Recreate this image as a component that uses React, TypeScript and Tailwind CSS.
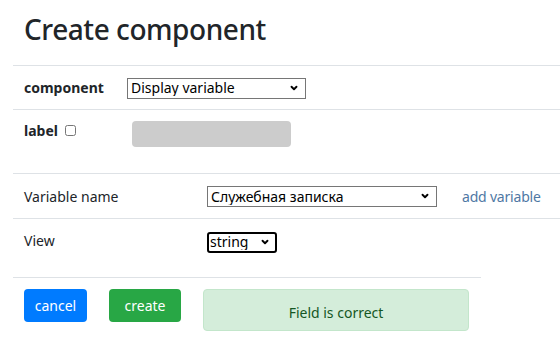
import { ChevronDown } from 'lucide-react'

function Select({ value, className, focused }: { value: string; className: string; focused?: boolean }) {
  return (
    <div className={`relative ${className}`}>
      <select
        defaultValue={value}
        className={
          focused
            ? 'appearance-none w-full h-full bg-white border-2 border-black rounded-[3px] pl-px py-0 text-[14px] leading-[16px] text-black outline-none'
            : 'appearance-none w-full h-full bg-white border border-[#767676] pl-[3px] py-0 text-[14px] leading-[16px] text-black outline-none'
        }
      >
        <option>{value}</option>
      </select>
      <ChevronDown
        strokeWidth={4.5}
        className="absolute right-[7px] top-1/2 -translate-y-1/2 w-[10px] h-[10px] text-black pointer-events-none"
      />
    </div>
  )
}

export default function App() {
  return (
    <div className="w-[560px] h-[356px] overflow-hidden bg-white text-[#212529] font-['Noto_Sans','Open_Sans',sans-serif]">
      {/* заголовок */}
      <h1 className="pl-6 pt-[12px] pb-[19px] text-[28px] leading-[34px] font-medium tracking-[-0.45px]">
        Create component
      </h1>

      <div className="ml-[13px] text-[14px]">
        {/* component */}
        <div className="h-[44px] border-t border-[#dee2e6] pl-[11px] flex items-center">
          <span className="w-[103px] font-bold">component</span>
          <Select value="Display variable" className="w-[179px] h-[21px]" />
        </div>

        {/* label */}
        <div className="h-[64px] border-t border-[#dee2e6] pl-[11px] pt-[11px] flex items-start">
          <span className="font-bold leading-[20px]">label</span>
          <input type="checkbox" className="ml-[7px] mt-[4px] w-[11px] h-[11px]" />
          <div className="ml-[56px] w-[159px] h-[26px] rounded bg-[#cccccc]" />
        </div>

        {/* variable */}
        <div className="h-[45px] border-t border-[#dee2e6] pl-[11px] flex items-center">
          <span className="w-[183px]">Variable name</span>
          <Select value="Служебная записка" className="w-[230px] h-[21px]" />
          <a href="#" className="ml-[25px] text-[#4f78a4] tracking-[-0.2px]">
            add variable
          </a>
        </div>

        {/* view */}
        <div className="h-[59px] border-t border-[#dee2e6] pl-[11px] pt-[12px] flex items-start">
          <span className="w-[183px] leading-[20px]">View</span>
          <Select value="string" className="w-[70px] h-[21px]" focused />
        </div>

        <div className="w-[468px] border-t border-[#dee2e6]" />

        {/* действия */}
        <div className="pl-[11px] pt-[11px] flex items-start">
          <button className="w-[63px] h-[33px] rounded bg-[#007bff] text-white">cancel</button>
          <button className="ml-[22px] w-[72px] h-[33px] rounded bg-[#28a745] text-white">create</button>
          <div className="ml-[22px] w-[266px] h-[42px] rounded border border-[#c3e6cb] bg-[#d4edda] text-[#155724] flex items-center justify-center pt-[4px]">
            Field is correct
          </div>
        </div>
      </div>
    </div>
  )
}
